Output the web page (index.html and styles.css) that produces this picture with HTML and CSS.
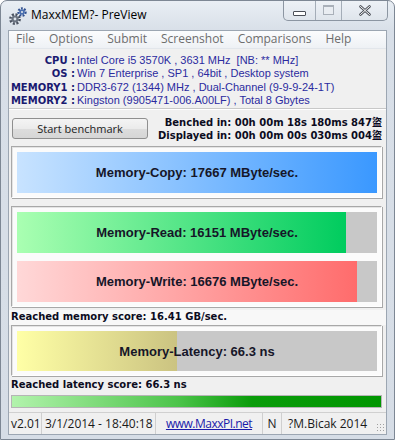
FILE: index.html
```html
<!DOCTYPE html>
<html lang="en">
<head>
    <meta charset="UTF-8">
    <title>MaxxMEM?- PreView</title>
    <link rel="stylesheet" href="styles.css">
</head>
<body>
<div class="window">
    <div class="titlebar">
        <svg class="app-icon" width="20" height="20" viewBox="0 0 20 20">
            <!-- big gear -->
            <circle cx="7" cy="13" r="4.6" fill="none" stroke="#4a5260" stroke-width="2.6" stroke-dasharray="2 1.6"/>
            <circle cx="7" cy="13" r="3.6" fill="#6a7380"/>
            <circle cx="7" cy="13" r="1.4" fill="#dde3ea"/>
            <!-- small gear -->
            <circle cx="14" cy="6" r="3.6" fill="none" stroke="#2f4f8f" stroke-width="2.2" stroke-dasharray="1.8 1.3"/>
            <circle cx="14" cy="6" r="2.8" fill="#4a6fb0"/>
            <circle cx="14" cy="6" r="1.1" fill="#dde3ea"/>
        </svg>
        <span class="title">MaxxMEM?- PreView</span>
        <div class="caption-buttons">
            <span class="cap-btn cap-min"><i></i></span>
            <span class="cap-btn cap-max"><i></i></span>
            <span class="cap-btn cap-close">
                <svg width="12" height="11" viewBox="0 0 12 11">
                    <path d="M1.5 1.5 L10.5 9.5 M10.5 1.5 L1.5 9.5" stroke="#4b4f57" stroke-width="2.6" stroke-linecap="round"/>
                    <path d="M1.5 1.5 L10.5 9.5 M10.5 1.5 L1.5 9.5" stroke="#fff" stroke-width="1" stroke-linecap="round"/>
                </svg>
            </span>
        </div>
    </div>

    <div class="client">
        <div class="menubar">
            <span>File</span>
            <span>Options</span>
            <span>Submit</span>
            <span>Screenshot</span>
            <span>Comparisons</span>
            <span>Help</span>
        </div>

        <div class="content">
            <div class="sysinfo">
                <span class="key">CPU :</span><span class="val">Intel Core i5 3570K , 3631 MHz&nbsp; [NB: ** MHz]</span>
                <span class="key">OS :</span><span class="val">Win 7 Enterprise , SP1 , 64bit , Desktop system</span>
                <span class="key">MEMORY1 :</span><span class="val">DDR3-672 (1344) MHz , Dual-Channel (9-9-9-24-1T)</span>
                <span class="key">MEMORY2 :</span><span class="val">Kingston (9905471-006.A00LF) , Total 8 Gbytes</span>
            </div>

            <div class="toolbar">
                <button class="start-btn">Start benchmark</button>
                <div class="times">
                    <div>Benched in: 00h 00m 18s 180ms 847盜</div>
                    <div>Displayed in: 00h 00m 00s 030ms 004盜</div>
                </div>
            </div>

            <div class="group">
                <div class="bar">
                    <div class="fill fill-copy" style="width: 100%"></div>
                    <span class="bar-label">Memory-Copy: 17667 MByte/sec.</span>
                </div>
            </div>

            <div class="group">
                <div class="bar">
                    <div class="fill fill-read" style="width: 91.4%"></div>
                    <span class="bar-label">Memory-Read: 16151 MByte/sec.</span>
                </div>
                <div class="bar">
                    <div class="fill fill-write" style="width: 94.4%"></div>
                    <span class="bar-label">Memory-Write: 16676 MByte/sec.</span>
                </div>
            </div>

            <div class="score score-mem">Reached memory score: 16.41 GB/sec.</div>

            <div class="group group-latency">
                <div class="bar bar-latency">
                    <div class="fill fill-latency" style="width: 44.4%"></div>
                    <span class="bar-label">Memory-Latency: 66.3 ns</span>
                </div>
            </div>

            <div class="score">Reached latency score: 66.3 ns</div>

            <div class="progress"><div class="progress-fill"></div></div>
        </div>

        <div class="statusbar">
            <span class="panel p-ver">v2.01</span>
            <span class="panel p-date">3/1/2014 - 18:40:18</span>
            <span class="panel p-link"><a href="#">www.MaxxPI.net</a></span>
            <span class="panel p-n">N</span>
            <span class="panel p-copy">?M.Bicak 2014</span>
            <span class="grip"></span>
        </div>
    </div>
</div>
</body>
</html>
```

FILE: styles.css
```css
body {
    margin: 0;
    background: #ffffff;
    font-family: "Liberation Sans", Arial, sans-serif;
}
.window {
    position: relative;
    width: 395px;
    height: 440px;
    box-sizing: border-box;
    border: 1px solid #7d8794;
    border-radius: 7px 7px 0 0;
    background: linear-gradient(#e9eef4, #d8dfe8 30px, #d6dde6);
    display: flex;
    flex-direction: column;
    overflow: hidden;
}
.titlebar {
    height: 29px;
    flex: none;
    display: flex;
    align-items: center;
    padding-left: 7px;
}
.app-icon {
    margin-top: 1px;
}
.title {
    margin-left: 3px;
    margin-bottom: 2px;
    font-family: "Open Sans", sans-serif;
    font-size: 12px;
    color: #000;
}
.caption-buttons {
    position: absolute;
    top: -1px;
    right: 6px;
    display: flex;
    height: 20px;
    border: 1px solid #8c96a2;
    border-top: none;
    border-radius: 0 0 5px 5px;
    overflow: hidden;
    background: linear-gradient(#eef2f7, #dfe5ec);
}
.cap-btn {
    display: flex;
    align-items: center;
    justify-content: center;
    height: 20px;
    border-left: 1px solid #a4adb8;
}
.cap-btn:first-child {
    border-left: none;
}
.cap-min {
    width: 31px;
}
.cap-min i {
    width: 11px;
    height: 3px;
    margin-top: 7px;
    border: 1px solid #4b4f57;
    background: #fff;
    border-radius: 1px;
}
.cap-max {
    width: 25px;
}
.cap-max i {
    width: 9px;
    height: 7px;
    border: 1px solid #a9b0b9;
    border-top-width: 2px;
    background: #e9edf2;
}
.cap-close {
    width: 45px;
}

.client {
    flex: 1;
    min-height: 0;
    margin: 0 7px 4px 7px;
    border: 1px solid #9ca6b2;
    background: #f0f0f0;
    display: flex;
    flex-direction: column;
}
.menubar {
    height: 18px;
    flex: none;
    box-sizing: border-box;
    padding-bottom: 3px;
    display: flex;
    align-items: center;
    background: linear-gradient(#fbfcfd, #eef1f5);
    border-bottom: 1px solid #e2e6eb;
    font-family: "Open Sans", sans-serif;
    font-size: 12px;
    color: #6d6d6d;
}
.menubar span {
    padding: 0 6px 0 7px;
}
.menubar span + span {
    margin-left: 1px;
}

.content {
    display: flex;
    flex-direction: column;
    padding: 0 4px 0 2px;
}
.sysinfo {
    display: grid;
    grid-template-columns: 66px 1fr;
    column-gap: 2px;
    margin-left: -2px;
    margin-right: -4px;
    padding: 5px 0 1px 0;
    border-bottom: 1px solid #c8c8c8;
    box-shadow: 0 1px 0 #fff;
    font-size: 11px;
    line-height: 13.3px;
}
.key {
    text-align: right;
    font-family: "DejaVu Sans", sans-serif;
    font-size: 10px;
    font-weight: bold;
    color: #1a1a70;
    white-space: nowrap;
}
.val {
    color: #2b2b9f;
    white-space: nowrap;
}

.toolbar {
    height: 21px;
    display: flex;
    align-items: center;
    justify-content: space-between;
    padding: 9px 0 7px 1px;
}
.start-btn {
    width: 136px;
    height: 21px;
    font-family: "Open Sans", sans-serif;
    font-size: 11px;
    color: #222;
    border: 1px solid #8f8f8f;
    border-radius: 3px;
    background: linear-gradient(#f4f4f4, #ebebeb 50%, #dddddd 51%, #d6d6d6);
    padding: 0;
}
.times {
    font-family: "DejaVu Sans", "Noto Sans CJK TC", sans-serif;
    font-size: 10px;
    font-weight: bold;
    color: #0c0c1e;
    text-align: right;
    line-height: 13px;
}

.group {
    display: flex;
    flex-direction: column;
    gap: 8px;
    padding: 5px 4px 4px 5px;
    border: 1px solid #a8a8a8;
    border-right-color: #fff;
    border-bottom-color: #fff;
    box-shadow: inset 1px 1px 0 #e4e4e4, 1px 1px 0 #a8a8a8;
    background: #fbfbfb;
    margin-bottom: 8px;
}
.group-latency {
    margin-bottom: 2px;
}
.bar {
    position: relative;
    height: 41px;
    background: #c8c8c8;
    display: flex;
    align-items: center;
    justify-content: center;
}
.bar-latency {
    height: 40px;
}
.fill {
    position: absolute;
    left: 0;
    top: 0;
    bottom: 0;
}
.fill-copy {
    background: linear-gradient(to right, #c8e3ff, #3a98ff);
}
.fill-read {
    background: linear-gradient(to right, #aaffb2, #00cc5e);
}
.fill-write {
    background: linear-gradient(to right, #ffd8d8, #ff6c6c);
}
.fill-latency {
    background: linear-gradient(to right, #ffffa6, #cbc381);
}
.bar-label {
    position: relative;
    font-size: 13px;
    font-weight: bold;
    color: #161628;
}

.score {
    font-family: "DejaVu Sans", sans-serif;
    font-size: 10px;
    font-weight: bold;
    color: #0c0c1e;
    line-height: 14px;
    padding-bottom: 1px;
}
.score-mem {
    margin: -5px -4px 0 -2px;
    padding-left: 2px;
    background: #f8f8f8;
}

.progress {
    height: 11px;
    margin-top: 2px;
    border: 1px solid #b5b5b5;
    background: #e6e6e6;
}
.progress-fill {
    height: 100%;
    background: linear-gradient(to right, #b2f3ac, #4cc44a 45%, #0a9c0a 65%, #009600);
}

.statusbar {
    height: 21px;
    flex: none;
    margin-top: auto;
    border-top: 1px solid #d0d0d0;
    display: flex;
    align-items: center;
    font-family: "Open Sans", sans-serif;
    font-size: 12px;
    color: #1a1a1a;
    white-space: nowrap;
}
.panel {
    height: 100%;
    display: flex;
    align-items: center;
    border-right: 1px solid #cfcfcf;
    padding: 0 3px;
}
.p-ver {
    width: 27px;
    padding-left: 2px;
}
.p-date {
    width: 109px;
    padding-right: 1px;
}
.p-link {
    width: 100px;
    justify-content: center;
}
.p-link a {
    color: #1a1aaa;
    letter-spacing: -0.5px;
}
.p-n {
    width: 12px;
    justify-content: center;
}
.p-copy {
    border-right: none;
    padding-left: 6px;
}
.grip {
    margin-left: auto;
    width: 8px;
    height: 8px;
    margin-right: 2px;
    margin-top: 6px;
    background: radial-gradient(circle, #a0a0a0 0.8px, transparent 1px) 0 0 / 3px 3px;
}
```
